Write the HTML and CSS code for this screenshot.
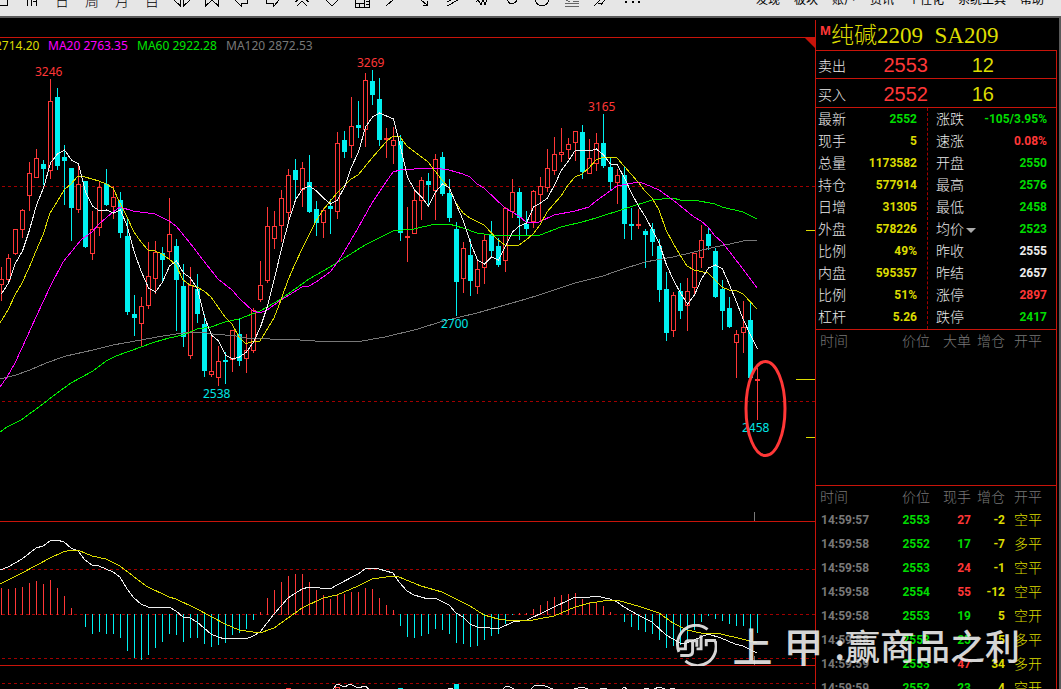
FILE: index.html
```html
<!DOCTYPE html>
<html lang="zh-CN">
<head>
<meta charset="utf-8">
<title>纯碱2209 SA209</title>
<link rel="stylesheet" href="styles.css">
</head>
<body>
<header class="toolbar">
  <div class="tools">
    <button class="tool" aria-label="切换"><svg viewBox="-9 0 18 10"><path d="M-2 5.500H5.500V0"/></svg></button>
    <button class="tool" aria-label="柱线"><svg viewBox="-9 0 18 10"><path d="M-4.500 6V0M-.5 6V0M4.500 6V0M1 1.500H5"/></svg></button>
    <button class="tool period">日</button>
    <button class="tool period">周</button>
    <button class="tool period">月</button>
    <button class="tool period">目</button>
    <button class="tool" aria-label="压缩"><svg viewBox="-9 0 18 10"><path d="M-8 0L-1.500 6V0M1.500 0V6L8 0"/></svg></button>
    <button class="tool" aria-label="展开"><svg viewBox="-9 0 18 10"><path d="M-6.500 0V6L0 0L6.500 6V0"/></svg></button>
    <button class="tool" aria-label="向左"><svg viewBox="-9 0 18 10"><path d="M-7 0L-.5 6.500V3.500H5.500V0"/></svg></button>
    <button class="tool" aria-label="向右"><svg viewBox="-9 0 18 10"><path d="M7 0L1.500 6.500V3.500H-5.500V0"/></svg></button>
    <button class="tool" aria-label="上移"><svg viewBox="-9 0 18 10"><path d="M-7 2L-4 0M7 2L4 0M-5 6L0 1L5 6"/></svg></button>
    <button class="tool" aria-label="下移"><svg viewBox="-9 0 18 10"><path d="M-6 0L0 6L6 0"/></svg></button>
    <button class="tool" aria-label="窗口"><svg viewBox="-9 0 18 10"><path d="M-6.500 0V7.500H7.500V0M-6.500 3.500H2.500M2.500 0V7.500M-2.500 3.500V7.500M4 1.500H7M4 4.500H7"/></svg></button>
    <button class="tool" aria-label="直线"><svg viewBox="-9 0 18 10"><path d="M-6 6L1 0"/></svg></button>
    <button class="tool" aria-label="箭头"><svg viewBox="-9 0 18 10"><path d="M-1 0L5 5M5.500 1V5.500H1M4 5.500L5.500 3.500"/></svg></button>
    <button class="tool" aria-label="平行线"><svg viewBox="-9 0 18 10"><path d="M-5 2L-1 0M-5 6L6 0"/></svg></button>
    <button class="tool" aria-label="波浪"><svg viewBox="-9 0 18 10"><path d="M-6 2L-4 0L-1 4.500L1 0L3 4.500L5 0"/></svg></button>
    <button class="tool" aria-label="圆点"><svg viewBox="-9 0 18 10"><path d="M-4.500 0Q-4 3.500 0 3.500T4.500 0"/></svg></button>
    <button class="tool" aria-label="圆"><svg viewBox="-9 0 18 10"><path d="M-6.500 0Q-6 5.500 0 5.500T6.500 0"/></svg></button>
    <button class="tool" aria-label="文字"><svg viewBox="-9 0 18 10"><path d="M-7 6.500H7M-7 3.500H7M-6 0L-2 2M1 1.500H7" class="faint"/></svg></button>
    <button class="tool" aria-label="画笔"><svg viewBox="-9 0 18 10"><path d="M-8 6L-2 0M-4 3H0L3 0M-1 5L2 1"/></svg></button>
    <button class="tool" aria-label="更多"><svg viewBox="-9 0 18 10"><path d="M-7 2H-5M0 2H2M6 2H8" class="dots"/></svg></button>
  </div>
  <nav class="menu">
    <a href="#">发现</a><a href="#">板块</a><a href="#">账户</a><a href="#">资讯</a><a href="#">个性化</a><a href="#">系统工具</a><a href="#">帮助</a>
  </nav>
</header>

<main class="workspace">
  <section class="chart">
    <svg id="chart" viewBox="0 18 815 671" preserveAspectRatio="xMinYMin slice" role="img" aria-label="K线图">
      <g id="grid"></g>
      <g id="candles"></g>
      <g id="lines"></g>
      <g class="label">
        <text x="-5" y="50" class="c-yellow">2714.20</text>
        <text x="48" y="50" class="c-magenta">MA20 2763.35</text>
        <text x="137" y="50" class="c-green">MA60 2922.28</text>
        <text x="226" y="50" class="c-gray">MA120 2872.53</text>
        <text x="35" y="76" class="c-red">3246</text>
        <text x="357" y="67" class="c-red">3269</text>
        <text x="588" y="111" class="c-red">3165</text>
        <text x="203" y="398" class="c-cyan">2538</text>
        <text x="441" y="328" class="c-cyan">2700</text>
        <text x="742" y="432" class="c-cyan">2458</text>
      </g>
      <ellipse class="mark" cx="765.500" cy="408.500" rx="19.500" ry="47"/>
    </svg>
  </section>

  <aside class="panel">
    <h1 class="name"><span class="flag">M</span>纯碱2209  SA209</h1>
    <div class="box">
      <div class="deal"><span>卖出</span><b class="c-red">2553</b><b class="c-yellow">12</b></div>
      <div class="deal"><span>买入</span><b class="c-red">2552</b><b class="c-yellow">16</b></div>
      <div class="quotes">
        <dl class="col">
          <div><dt>最新</dt><dd class="c-green">2552</dd></div>
          <div><dt>现手</dt><dd class="c-yellow">5</dd></div>
          <div><dt>总量</dt><dd class="c-yellow">1173582</dd></div>
          <div><dt>持仓</dt><dd class="c-yellow">577914</dd></div>
          <div><dt>日增</dt><dd class="c-yellow">31305</dd></div>
          <div><dt>外盘</dt><dd class="c-yellow">578226</dd></div>
          <div><dt>比例</dt><dd class="c-yellow">49%</dd></div>
          <div><dt>内盘</dt><dd class="c-yellow">595357</dd></div>
          <div><dt>比例</dt><dd class="c-yellow">51%</dd></div>
          <div><dt>杠杆</dt><dd class="c-yellow">5.26</dd></div>
        </dl>
        <dl class="col">
          <div><dt>涨跌</dt><dd class="c-green">-105/3.95%</dd></div>
          <div><dt>速涨</dt><dd class="c-red">0.08%</dd></div>
          <div><dt>开盘</dt><dd class="c-green">2550</dd></div>
          <div><dt>最高</dt><dd class="c-green">2576</dd></div>
          <div><dt>最低</dt><dd class="c-green">2458</dd></div>
          <div><dt><button class="pick">均价</button></dt><dd class="c-green">2523</dd></div>
          <div><dt>昨收</dt><dd>2555</dd></div>
          <div><dt>昨结</dt><dd>2657</dd></div>
          <div><dt>涨停</dt><dd class="c-red">2897</dd></div>
          <div><dt>跌停</dt><dd class="c-green">2417</dd></div>
        </dl>
      </div>
      <div class="orders">
        <table class="ticks">
          <colgroup><col class="w-time"><col class="w-price"><col class="w-vol"><col class="w-chg"><col></colgroup>
          <thead><tr><th>时间</th><th>价位</th><th>大单</th><th>增仓</th><th>开平</th></tr></thead>
        </table>
      </div>
      <table class="ticks">
        <colgroup><col class="w-time"><col class="w-price"><col class="w-vol"><col class="w-chg"><col></colgroup>
        <thead><tr><th>时间</th><th>价位</th><th>现手</th><th>增仓</th><th>开平</th></tr></thead>
        <tbody>
          <tr><td>14:59:57</td><td>2553</td><td class="c-red">27</td><td>-2</td><td>空平</td></tr>
          <tr><td>14:59:58</td><td>2552</td><td class="c-green">17</td><td>-7</td><td>多平</td></tr>
          <tr><td>14:59:58</td><td>2553</td><td class="c-red">24</td><td>-1</td><td>空平</td></tr>
          <tr><td>14:59:58</td><td>2554</td><td class="c-red">55</td><td>-12</td><td>空平</td></tr>
          <tr><td>14:59:58</td><td>2553</td><td class="c-green">19</td><td>5</td><td>空开</td></tr>
          <tr><td>14:59:58</td><td>2553</td><td class="c-green">25</td><td>5</td><td>多平</td></tr>
          <tr><td>14:59:59</td><td>2553</td><td class="c-red">47</td><td>34</td><td>多开</td></tr>
          <tr><td>14:59:59</td><td>2552</td><td class="c-green">23</td><td>4</td><td>空开</td></tr>
        </tbody>
      </table>
    </div>
  </aside>
</main>

<div class="watermark">
  <svg viewBox="829 343 126 128" aria-hidden="true">
    <path d="M926 359A57 59 0 0 0 838 428M950 395A57 59 0 0 1 858 456"/>
    <path d="M838 419H858V405Q858 394 868 394H893V412M842 439H868Q880 439 880 427V394M892 419H906V377M952 393H922V411"/>
  </svg>
  <span class="brand">上</span><span class="brand">甲</span><span class="slogan">:赢商品之利</span>
</div>
<script src="chart.js"></script>
</body>
</html>
```

FILE: styles.css
```css
* { box-sizing: border-box; }

body {
  margin: 0;
  height: 100vh;
  display: flex;
  flex-direction: column;
  position: relative;
  overflow: hidden;
  background: #000;
  color: #ececec;
  font-family: "Liberation Sans", "Noto Sans CJK SC", sans-serif;
  font-size: 14px;
}

button {
  padding: 0;
  border: 0;
  background: none;
  color: inherit;
  font: inherit;
}

.c-red { color: #ff3737; fill: #ff3737; }
.c-green { color: #00dc00; fill: #00e600; }
.c-yellow { color: #dcdc00; fill: #dcdc00; }
.c-magenta { fill: #ff00ff; }
.c-gray { fill: #787878; }
.c-cyan { fill: #00e6e6; }

/* toolbar */
.toolbar {
  flex: none;
  display: flex;
  justify-content: space-between;
  height: 18px;
  padding-right: 17px;
  overflow: hidden;
  background: #e6e6e6;
  border-bottom: 2px solid #5a5a5a;
  color: #000;
}
.tools { display: flex; align-items: flex-start; margin-left: -13px; }
.tool { width: 30px; height: 16px; display: flex; justify-content: center; }
.tool svg { width: 18px; height: 10px; }
.tool path { fill: none; stroke: #000; stroke-width: 1; shape-rendering: crispEdges; }
.tool .faint { stroke: #666; }
.tool .dots { stroke-width: 2; }
.period { line-height: 14px; margin-top: -6px; font-size: 14px; font-weight: 300; }
.menu { display: flex; gap: 14px; margin-top: -6px; font-size: 12px; line-height: 12px; }
.menu a { color: #000; text-decoration: none; }

/* workspace */
.workspace {
  flex: 1;
  min-height: 0;
  display: flex;
  border-right: 2px solid #5a5a5a;
  padding-right: 2px;
}
.chart { flex: 1; min-width: 0; }
.chart svg { display: block; width: 100%; height: 100%; }
.label { font-family: "Noto Sans", sans-serif; font-size: 12px; }
.mark { fill: none; stroke: #ff3737; stroke-width: 3; }
.solid { stroke: #c8140a; }
.dash { stroke: #a00000; stroke-dasharray: 3 3; }
.tag { stroke: #dcdc00; }
.tick { stroke: #787878; }
.up { stroke: #ff3737; fill: #000; }
.down { stroke: #00f0f0; }
.down-body { fill: #00f0f0; }
.line { fill: none; stroke-width: 1; }
.crisp { shape-rendering: crispEdges; }

/* quote panel */
.panel {
  flex: 0 0 242px;
  margin-top: 2px;
  overflow: hidden;
  border-left: 1px solid #c8140a;
  font-weight: 300;
}
.name {
  display: flex;
  align-items: flex-start;
  height: 30px;
  margin: 0;
  padding-left: 4px;
  color: #dcdc00;
  font: 300 23px/32px "Liberation Serif", "Noto Sans CJK SC", serif;
  white-space: pre;
}
.flag {
  color: #ff3737;
  width: 11px;
  font: bold 13px/22px "Liberation Sans", sans-serif;
}
.box { border: solid #c8140a; border-width: 1px 1px 0 0; min-height: 100%; }
.deal {
  display: grid;
  grid-template-columns: 48px 62px 66px;
  align-items: center;
  height: 28px;
  padding-left: 2px;
  border-bottom: 1px solid #c8140a;
}
.deal + .deal { height: 29px; padding-top: 2px; }
.deal b { font-weight: 400; font-size: 20px; line-height: 24px; text-align: right; }
.quotes {
  display: grid;
  grid-template-columns: 111px 1fr;
  border-bottom: 1px solid #c8140a;
}
.col { margin: 0; padding: 0 10px 1px 2px; }
.col + .col { padding: 0 9px 1px 8px; border-left: 1px dashed #a00000; }
.col div { display: flex; justify-content: space-between; align-items: center; height: 22px; line-height: 20px; }
.col dd { margin: 0; font-family: Roboto, sans-serif; font-weight: bold; font-size: 12px; }
.pick { display: flex; align-items: center; gap: 2px; }
.pick::after {
  content: "";
  margin-top: 3px;
  border: 5px solid transparent;
  border-top-color: #aaa;
  border-bottom: 0;
}
.orders { min-height: 156px; border-bottom: 1px solid #c8140a; }
.ticks { width: 100%; table-layout: fixed; border-collapse: collapse; }
.w-time { width: 59px; }
.w-price { width: 55px; }
.w-vol { width: 41px; }
.w-chg { width: 34px; }
.ticks th, .ticks td { padding: 0; text-align: right; line-height: 20px; white-space: nowrap; }
.ticks th { height: 22px; color: #787878; font-weight: 300; }
.ticks td { height: 24px; color: #dcdc00; font-family: Roboto, "Noto Sans CJK SC", sans-serif; font-size: 12px; font-weight: bold; }
.ticks th:first-child { text-align: left; padding-left: 4px; }
.ticks td:first-child { text-align: left; padding-left: 5px; color: #787878; }
.ticks td:nth-child(2) { color: #00dc00; }
.ticks td.c-red { color: #ff3737; }
.ticks td.c-green { color: #00dc00; }
.ticks th:last-child, .ticks td:last-child { padding-right: 14px; }
.ticks td:last-child { font-weight: 300; font-size: 14px; }

/* watermark */
.watermark {
  position: absolute;
  right: 41px;
  bottom: 22px;
  display: flex;
  align-items: center;
  color: #e8e8e8;
  opacity: .92;
  pointer-events: none;
  font-family: "Noto Sans CJK SC", sans-serif;
  line-height: 44px;
}
.watermark svg { width: 41px; height: 42px; margin-right: 16px; }
.watermark path { fill: none; stroke: #e8e8e8; stroke-width: 9; }
.brand { font-size: 40px; font-weight: 500; margin-right: 11px; }
.slogan { font-size: 35px; font-weight: 500; }
```

FILE: chart.js
```js
const NS = "http://www.w3.org/2000/svg";
const STEP = 7;
const X0 = 1.5;

function add(parent, tag, attrs) {
  const el = document.createElementNS(NS, tag);
  for (const key in attrs) el.setAttribute(key, attrs[key]);
  parent.appendChild(el);
}

const grid = document.getElementById("grid");
const candles = document.getElementById("candles");
const lines = document.getElementById("lines");

function rule(x1, y1, x2, y2, cls) {
  add(grid, "line", { x1, y1, x2, y2, class: cls + " crisp" });
}

[37.5, 521.5, 665.5].forEach(y => rule(0, y, 815, y, "solid"));
[186.5, 401.5, 569.5, 614.5, 658.5, 683.5].forEach(y => rule(2, y, 815, y, "dash"));
rule(806, 230.5, 815, 230.5, "tag");
rule(796, 379.5, 815, 379.5, "tag");
rule(806, 437.5, 815, 437.5, "tag");
rule(754.5, 512, 754.5, 521, "tick");
rule(754.5, 656, 754.5, 665, "tick");
add(grid, "path", { d: "M805 38H815V48Z", fill: "#c8140a" });

/* direction (u/d), high, body top, body bottom, low */
const data = `u267,279,284,301 u254,258,279,284 u229,229,253,255 u209,210,229,238 u162,173,195,211 u149,158,177,177
d160,164,169,185 u79,101,170,179 d88,97,166,170 d145,157,161,205 d168,168,208,241 u164,184,209,213 d181,181,247,248
u211,229,253,260 u181,187,227,236 d169,184,205,206 u186,197,206,219 d192,200,233,238 d219,236,312,315 d295,314,318,336
u297,306,323,347 u242,276,305,309 u241,252,278,294 d247,253,260,282 u198,234,251,259 d239,246,280,331 d264,286,337,347
u267,285,355,359 d274,289,314,323 d314,324,371,377 u334,371,374,377 u346,361,377,386 d352,360,362,384 u330,330,359,372
d319,334,361,366 u334,350,358,373 u308,310,350,353 u261,285,299,302 u207,226,280,283 u211,226,238,249 u190,198,225,242
u169,175,212,220 d159,170,180,202 u162,168,189,207 d155,182,212,213 d201,209,223,236 u208,210,222,238 d199,206,209,234
u132,143,211,219 d131,140,152,158 u97,126,145,158 d101,125,128,138 u73,80,129,147 d70,81,95,105 d78,99,140,146
u128,138,139,158 u127,140,145,164 d135,141,233,241 u207,236,237,262 u189,200,233,233 u177,180,200,220 d173,181,185,206
u154,159,190,220 d152,157,194,196 d179,193,218,222 d222,229,282,316 u242,248,278,293 d239,255,281,296 u261,269,286,294
u235,240,267,284 d221,235,251,257 d238,246,265,267 u207,208,260,272 u179,192,211,218 d188,192,218,240 d211,224,229,236
u190,191,221,228 u177,186,194,222 u149,168,187,192 u137,154,170,175 u128,152,154,162 u138,144,149,159 u131,131,142,161
d125,132,172,179 u139,158,173,174 u133,143,163,171 d114,143,166,168 d158,167,182,190 u169,175,182,204 d167,175,224,239
d208,224,226,240 u209,224,225,229 d229,231,235,268 d223,229,242,256 d239,246,290,302 d272,289,333,341 u292,295,330,337
d283,291,311,319 u278,291,305,331 u253,253,287,294 u225,240,257,268 d228,234,246,250 d248,251,297,298 d280,289,311,330
d297,308,327,328 u330,334,342,378 u301,327,332,353 d303,320,378,378 u368,379,380,420`.split(/\s+/);

data.forEach((item, i) => {
  const x = X0 + STEP * i;
  const up = item[0] === "u";
  const [high, top, bottom, low] = item.slice(1).split(",").map(Number);
  add(candles, "line", { x1: x, x2: x, y1: high, y2: low, class: (up ? "up" : "down") + " crisp" });
  if (up) {
    add(candles, "rect", { x: x - 2, y: top + 0.5, width: 4, height: bottom - top, class: "up crisp" });
  } else {
    add(candles, "rect", { x: x - 2.5, y: top, width: 5, height: bottom - top, class: "down-body crisp" });
  }
});

/* MACD histogram: one end per bar, the other on the zero line */
const macd = [588,589,588,587,583,581,584,580,588,596,608,614,627,634,632,634,634,638,651,658,660,655,648,642,634,635,642,
638,638,644,647,645,643,635,633,629,620,612,598,590,582,576,574,574,582,590,595,599,595,594,592,592,588,589,598,605,610,
626,637,638,636,634,629,630,634,643,644,647,646,640,636,634,624,615,613,613,609,605,601,597,595,594,593,599,602,603,606,
612,614,622,627,630,632,634,640,648,646,645,641,630,622,616,619,621,624,626,626,632,633];
macd.forEach((end, i) => {
  if (end === 614) return;
  const x = X0 + STEP * i;
  add(candles, "line", { x1: x, x2: x, y1: end, y2: end < 614 ? 615 : 614, class: (end < 614 ? "up" : "down") + " crisp" });
});

/* volume pane, cut by the window's lower edge */
add(candles, "rect", { x: 454, y: 684, width: 5, height: 8, class: "down-body crisp" });
add(candles, "rect", { x: 398, y: 688, width: 5, height: 4, class: "down-body crisp" });
add(candles, "rect", { x: 335.5, y: 687.5, width: 4, height: 8, class: "up crisp" });
add(candles, "rect", { x: 286.5, y: 688.5, width: 4, height: 8, class: "up crisp" });

function curve(color, points) {
  add(lines, "polyline", { points, stroke: color, class: "line crisp" });
}

curve("#787878", "0,379 16,375 30,370 46,363 66,356 93,350 113,345 141,340 163,336 183,333 200,332 213,334 236,336 246,338 270,339 300,340 330,342 362,341 385,337 418,329 440,322 456,318 477,313 526,299 539,295 554,290 575,283 603,276 617,271 645,262 673,257 694,252 715,247 730,244 743,241 757,240");
curve("#00f000", "0,432 7,427 21,420 43,404 53,396 71,383 93,371 106,361 116,356 141,347 155,342 169,338 183,335 197,329 211,327 225,322 239,319 260,311 281,299 309,279 330,267 365,245 393,231 414,229 435,224 449,224 463,228 477,233 498,236 512,235 540,235 561,227 582,222 596,218 624,209 652,200 673,198 680,200 694,200 715,204 722,207 743,212 757,219");
curve("#ff00ff", "0,387 7,377 15,363 22,348 36,317 50,287 63,262 81,240 85,237 92,232 99,224 113,212 120,207 133,211 155,214 169,221 176,226 190,243 203,260 218,279 232,290 239,298 253,311 260,313 267,310 281,300 302,287 309,286 316,282 323,277 330,272 337,263 344,252 358,228 372,203 386,182 393,172 400,170 414,169 435,168 449,170 463,174 470,177 477,184 484,188 505,208 519,216 526,222 539,222 554,215 575,211 589,207 596,201 610,191 617,186 639,182 645,184 659,190 673,200 694,217 701,221 708,227 715,236 722,242 736,260 749,277 757,288");
curve("#dcdc00", "0,323 8,310 15,295 22,283 29,268 36,251 43,235 50,213 57,202 64,190 71,184 78,176 85,177 99,181 106,184 113,188 120,203 127,217 134,232 141,242 148,250 155,251 162,254 169,259 176,265 183,280 190,285 197,287 204,291 211,297 218,307 225,317 232,324 239,337 246,344 253,341 260,341 268,328 274,318 281,300 288,280 295,264 302,249 309,235 316,221 323,210 337,193 351,179 358,175 372,158 386,142 393,136 400,137 407,146 428,162 442,180 449,188 456,203 463,213 470,218 484,225 498,240 505,245 519,245 526,240 533,234 540,225 547,212 561,196 568,185 575,177 582,174 589,168 596,160 603,157 617,158 638,182 645,191 652,198 659,210 666,230 673,243 680,255 687,266 694,270 708,273 722,287 729,290 737,291 743,294 757,309");

const ma5 = [294,283,263,251,230,205,188,163,154,150,160,164,192,206,211,210,213,210,227,253,272,288,292,282,266,261,273,278,
289,317,335,341,355,359,357,352,342,327,306,278,249,222,200,189,186,191,198,204,200,187,167,152,127,117,113,116,119,147,177,
190,197,206,192,184,188,205,221,243,260,264,257,260,246,232,226,223,207,203,198,185,170,161,150,150,151,149,155,164,165,178,
193,206,217,230,244,265,280,293,304,295,279,268,265,269,285,302,320,335,349];
curve("#f0f0f0", ma5.map((y, i) => `${X0 + STEP * i},${y}`).join(" "));

curve("#f0f0f0", "0,570 8,567 22,559 36,548 43,546 50,541 57,540 64,542 71,548 78,551 85,560 92,565 99,566 113,572 120,577 127,589 134,598 141,604 148,607 162,608 169,607 176,611 183,617 190,618 197,622 204,628 211,634 218,637 225,639 232,638 246,639 253,636 260,632 274,614 288,598 302,589 309,587 330,589 337,585 358,574 365,569 372,568 379,569 393,573 399,582 407,591 414,595 428,599 435,598 449,605 456,613 463,617 470,624 477,627 490,628 498,629 513,622 527,620 546,611 575,597 590,597 596,596 610,599 617,602 624,607 638,615 652,622 666,635 680,643 687,643 701,637 708,634 721,638 735,644 743,646 757,653");
curve("#dcdc00", "0,584 22,573 50,558 63,552 71,550 80,551 92,556 106,559 120,566 146,586 169,597 176,599 197,609 225,624 239,630 260,633 274,628 288,618 302,608 323,598 337,595 358,586 372,579 393,576 399,577 421,586 442,592 470,606 484,615 498,619 513,621 533,620 554,616 575,607 590,603 610,600 620,601 638,606 659,613 673,623 687,630 701,633 721,634 742,639 757,643");

["333,689 337,684 345,687 350,684 358,688 365,686 369,689", "448,688.5 453,688.5", "503,689 506,686 510,687 514,689",
 "531,689 534,686 539,685 545,686 553,689", "574,689 582,687 588,689", "600,688.5 607,688.5", "622,689 624,687 627,689",
 "644,688.5 649,688.5", "654,689 659,687 665,689", "670,688.5 675,688.5"].forEach(p => curve("#f0f0f0", p));
```
